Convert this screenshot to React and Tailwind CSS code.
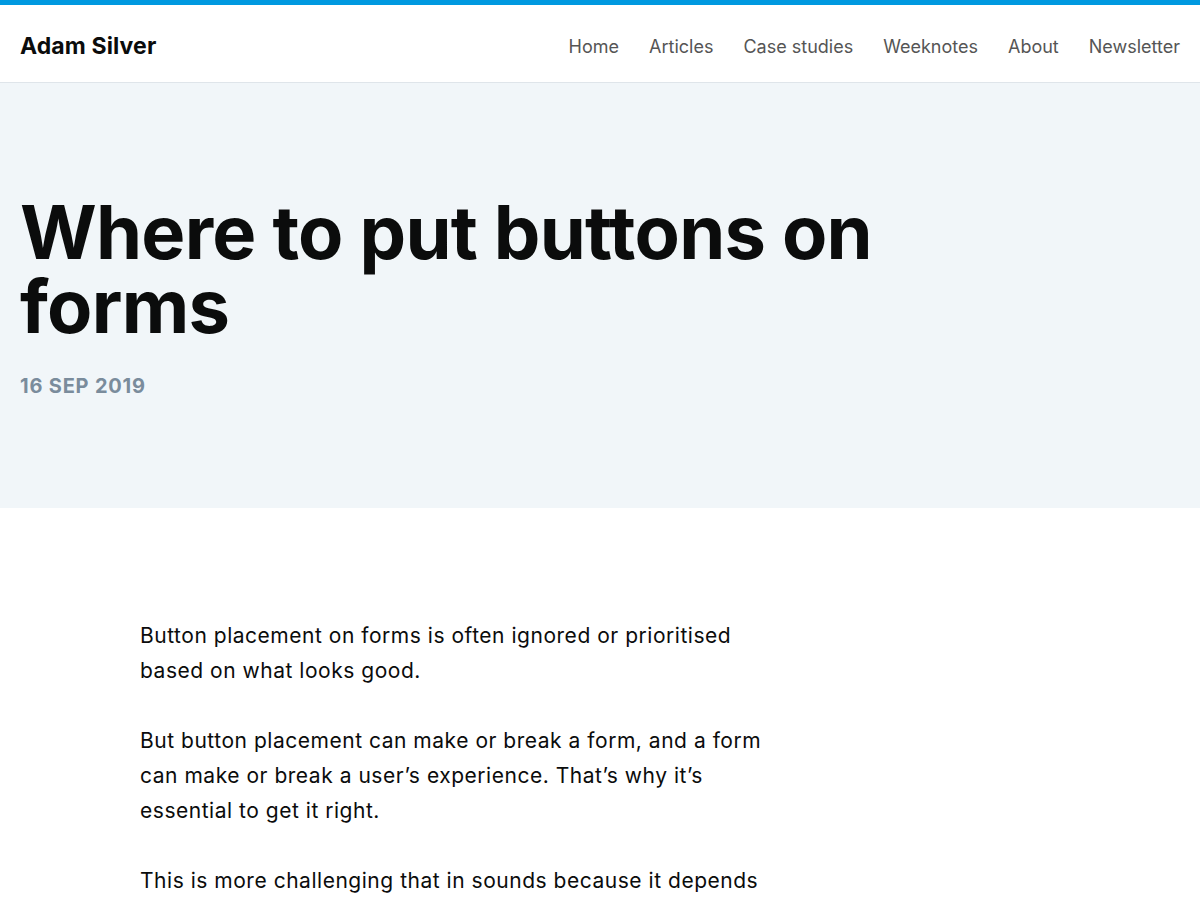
const NAV = ['Home', 'Articles', 'Case studies', 'Weeknotes', 'About', 'Newsletter'];

const sans = { fontFamily: 'Inter, "Liberation Sans", sans-serif' };

export default function App() {
  return (
    <div className="min-h-screen bg-white text-[#0b0c0c]" style={sans}>
      {/* Accent bar + masthead */}
      <header className="border-t-[5px] border-[#0099e0] border-b border-b-[#dfe5ea] bg-white">
        <div className="flex h-[77px] items-center justify-between px-5 pt-[6px]">
          <a className="text-[23px] font-bold tracking-[0.005em] text-[#0b0c0c]">Adam Silver</a>
          <nav className="flex items-center gap-[30px] text-[18px] text-[#555]">
            {NAV.map(item => (
              <a key={item}>{item}</a>
            ))}
          </nav>
        </div>
      </header>

      {/* Article title block */}
      <section className="h-[425px] bg-[#f1f6f9] px-5 pt-[112px]">
        <h1 className="max-w-[880px] text-[74px] font-bold leading-[74px] tracking-[-0.01em] text-[#0b0c0c]">
          Where to put buttons on forms
        </h1>
        <p className="mt-[28px] text-[20px] font-bold uppercase tracking-[0.04em] text-[#7a8c9c]">
          16 Sep 2019
        </p>
      </section>

      {/* Article body */}
      <article className="w-[772px] pl-[140px] pt-[110px] text-[21px] leading-[35px] tracking-[0.025em] text-[#0b0c0c]">
        <p>Button placement on forms is often ignored or prioritised based on what looks good.</p>
        <p className="mt-[35px]">
          But button placement can make or break a form, and a form can make or break a user’s experience. That’s why it’s essential to get it right.
        </p>
        <p className="mt-[35px]">
          This is more challenging that in sounds because it depends on a number of factors, such as the type of form and the number of buttons it has.
        </p>
      </article>
    </div>
  );
}
